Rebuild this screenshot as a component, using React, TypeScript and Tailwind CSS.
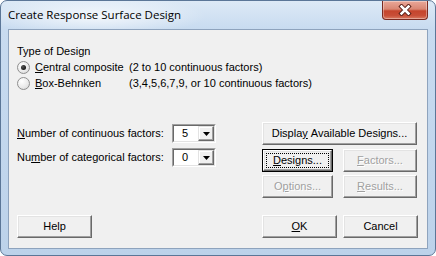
import React from 'react';

const ui = { fontFamily: '"Liberation Sans", Arial, sans-serif' };

function Btn({
  children,
  w,
  disabled = false,
  isDefault = false,
}: {
  children: React.ReactNode;
  w: string;
  disabled?: boolean;
  isDefault?: boolean;
}) {
  return (
    <div
      className={`${w} h-[23px] flex ${isDefault ? 'border border-black' : ''}`}
    >
      <div className="flex-1 flex border border-t-white border-l-white border-r-[#696969] border-b-[#696969] bg-[#f0f0f0] shadow-[inset_-1px_-1px_0_#a0a0a0,inset_1px_1px_0_#e3e3e3]">
        <div
          className={`flex-1 flex items-center justify-center text-[11px] leading-none ${
            isDefault ? 'm-[2px] border border-dotted border-black' : ''
          } ${disabled ? 'text-[#a0a0a0] [text-shadow:1px_1px_0_#fff]' : 'text-black'}`}
        >
          {children}
        </div>
      </div>
    </div>
  );
}

function Combo({ value }: { value: string }) {
  return (
    <div className="w-[44px] h-[19px] flex border border-t-[#a0a0a0] border-l-[#a0a0a0] border-r-white border-b-white">
      <div className="flex-1 flex bg-white border border-t-[#696969] border-l-[#696969] border-r-[#e3e3e3] border-b-[#e3e3e3]">
        <div className="flex-1 flex items-center pl-[8px] text-[11px] text-black">{value}</div>
        <div className="w-[16px] flex items-center justify-center bg-[#f0f0f0] border border-t-[#e3e3e3] border-l-[#e3e3e3] border-r-[#696969] border-b-[#696969] shadow-[inset_-1px_-1px_0_#a0a0a0,inset_1px_1px_0_#fff]">
          <svg width="7" height="4" viewBox="0 0 7 4">
            <path d="M0 0h7L3.5 4z" fill="#000" />
          </svg>
        </div>
      </div>
    </div>
  );
}

function Radio({ checked }: { checked?: boolean }) {
  return (
    <div className="w-[13px] h-[13px] rounded-full border border-[#8f8f8f] bg-[radial-gradient(circle_at_35%_30%,#ffffff,#e9e9e9_60%,#cfcfcf)] flex items-center justify-center">
      {checked && (
        <div className="w-[5px] h-[5px] rounded-full bg-[radial-gradient(circle_at_35%_35%,#555,#000)]" />
      )}
    </div>
  );
}

export default function App() {
  return (
    <div
      className="w-[436px] h-[256px] rounded-[7px] border border-[#5b7697] bg-[linear-gradient(180deg,#dde9f6_0px,#c8dbf0_28px,#bcd2ea_100%)] flex flex-col relative overflow-hidden"
      style={ui}
    >
      {/* title bar */}
      <div className="h-[28px] flex items-center pl-[7px] bg-[radial-gradient(ellipse_110px_20px_at_95px_15px,rgba(255,255,255,0.75),rgba(255,255,255,0))]">
        <span
          className="text-[11.5px] text-black leading-none"
          style={{ fontFamily: '"Open Sans", "Noto Sans", sans-serif' }}
        >
          Create Response Surface Design
        </span>
      </div>

      {/* close button */}
      <div className="absolute top-0 right-[7px] w-[46px] h-[19px] rounded-b-[4px] border border-t-0 border-[#7a2a21] bg-[linear-gradient(180deg,#eaa899_0%,#d98673_45%,#c5452d_55%,#c84e37_80%,#d97a61_100%)] shadow-[inset_0_0_0_1px_rgba(255,255,255,0.35)] flex items-center justify-center">
        <svg width="14" height="12" viewBox="0 0 14 12">
          <path d="M3.5 2.5l7 7M10.5 2.5l-7 7" stroke="#5a2018" strokeWidth="4.4" strokeLinecap="square" />
          <path d="M3.5 2.5l7 7M10.5 2.5l-7 7" stroke="#fff" strokeWidth="2.5" strokeLinecap="square" />
        </svg>
      </div>

      {/* client area */}
      <div className="mx-[7px] mb-[6px] flex-1 border border-[#8ea3bd] bg-[#f0f0f0] flex flex-col pl-[8px] pt-[15px] text-[11px] text-black">
        <p className="leading-[13px]">Type of Design</p>
        <div className="mt-[1px] h-[16px] flex items-center">
          <Radio checked />
          <span className="ml-[5px] w-[94px]">
            <u>C</u>entral composite
          </span>
          <span>(2 to 10 continuous factors)</span>
        </div>
        <div className="h-[16px] flex items-center">
          <Radio />
          <span className="ml-[5px] w-[94px]">
            <u>B</u>ox-Behnken
          </span>
          <span>(3,4,5,6,7,9, or 10 continuous factors)</span>
        </div>

        <div className="mt-[31px] flex">
          <div className="w-[245px] flex flex-col gap-[5px] pt-[2px]">
            <div className="flex items-center">
              <span className="w-[155px]">
                <u>N</u>umber of continuous factors:
              </span>
              <Combo value="5" />
            </div>
            <div className="flex items-center">
              <span className="w-[155px]">
                Nu<u>m</u>ber of categorical factors:
              </span>
              <Combo value="0" />
            </div>
          </div>
          <div className="flex flex-col">
            <Btn w="w-[155px]">
              Displa<u>y</u>&nbsp;Available Designs...
            </Btn>
            <div className="mt-[4px] flex gap-[10px]">
              <Btn w="w-[71px]" isDefault>
                <u>D</u>esigns...
              </Btn>
              <Btn w="w-[74px]" disabled>
                <u>F</u>actors...
              </Btn>
            </div>
            <div className="mt-[3px] flex gap-[10px]">
              <Btn w="w-[71px]" disabled>
                O<u>p</u>tions...
              </Btn>
              <Btn w="w-[74px]" disabled>
                <u>R</u>esults...
              </Btn>
            </div>
          </div>
        </div>

        <div className="mt-auto mb-[10px] flex">
          <Btn w="w-[75px]">Help</Btn>
          <div className="ml-[170px] flex gap-[6px]">
            <Btn w="w-[75px]">
              <u>O</u>K
            </Btn>
            <Btn w="w-[75px]">Cancel</Btn>
          </div>
        </div>
      </div>
    </div>
  );
}
